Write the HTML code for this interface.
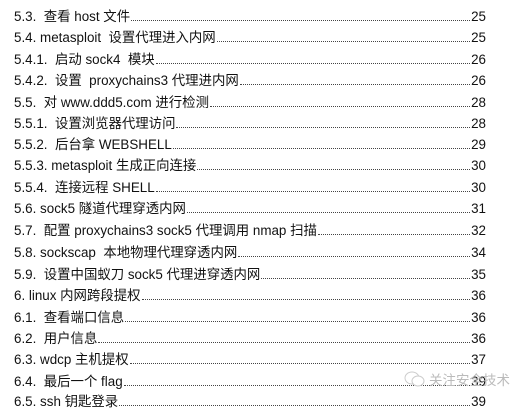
<!DOCTYPE html>
<html><head><meta charset="utf-8"><style>
body{margin:0;width:520px;height:403px;background:#fff;overflow:hidden;position:relative;font-family:"Liberation Sans","Noto Sans CJK SC",sans-serif;font-size:13.4px;color:#111}
.r{position:absolute;left:14px;width:472px;height:21px;display:flex;align-items:flex-end}
.t{white-space:pre;line-height:15px}
.d{flex:1;border-bottom:1px dotted #444;margin:0 1px 3px 1px}
.p{line-height:15px}
.wm{position:absolute;left:404px;top:369px;color:#bbb;font-size:13.5px;display:flex;align-items:center;gap:3px}
</style></head><body>
<div class="r" style="top:3px"><span class="t">5.3.  查看 host 文件</span><span class="d"></span><span class="p">25</span></div>
<div class="r" style="top:24px"><span class="t">5.4. metasploit  设置代理进入内网</span><span class="d"></span><span class="p">25</span></div>
<div class="r" style="top:46px"><span class="t">5.4.1.  启动 sock4  模块</span><span class="d"></span><span class="p">26</span></div>
<div class="r" style="top:67px"><span class="t">5.4.2.  设置  proxychains3 代理进内网</span><span class="d"></span><span class="p">26</span></div>
<div class="r" style="top:89px"><span class="t">5.5.  对 www.ddd5.com 进行检测</span><span class="d"></span><span class="p">28</span></div>
<div class="r" style="top:110px"><span class="t">5.5.1.  设置浏览器代理访问</span><span class="d"></span><span class="p">28</span></div>
<div class="r" style="top:131px"><span class="t">5.5.2.  后台拿 WEBSHELL</span><span class="d"></span><span class="p">29</span></div>
<div class="r" style="top:152px"><span class="t">5.5.3. metasploit 生成正向连接</span><span class="d"></span><span class="p">30</span></div>
<div class="r" style="top:174px"><span class="t">5.5.4.  连接远程 SHELL</span><span class="d"></span><span class="p">30</span></div>
<div class="r" style="top:195px"><span class="t">5.6. sock5 隧道代理穿透内网</span><span class="d"></span><span class="p">31</span></div>
<div class="r" style="top:217px"><span class="t">5.7.  配置 proxychains3 sock5 代理调用 nmap 扫描</span><span class="d"></span><span class="p">32</span></div>
<div class="r" style="top:239px"><span class="t">5.8. sockscap  本地物理代理穿透内网</span><span class="d"></span><span class="p">34</span></div>
<div class="r" style="top:261px"><span class="t">5.9.  设置中国蚁刀 sock5 代理进穿透内网</span><span class="d"></span><span class="p">35</span></div>
<div class="r" style="top:282px"><span class="t">6. linux 内网跨段提权</span><span class="d"></span><span class="p">36</span></div>
<div class="r" style="top:304px"><span class="t">6.1.  查看端口信息</span><span class="d"></span><span class="p">36</span></div>
<div class="r" style="top:325px"><span class="t">6.2.  用户信息</span><span class="d"></span><span class="p">36</span></div>
<div class="r" style="top:346px"><span class="t">6.3. wdcp 主机提权</span><span class="d"></span><span class="p">37</span></div>
<div class="r" style="top:368px"><span class="t">6.4.  最后一个 flag</span><span class="d"></span><span class="p">39</span></div>
<div class="r" style="top:388px"><span class="t">6.5. ssh 钥匙登录</span><span class="d"></span><span class="p">39</span></div>
<div class="wm"><svg width="22" height="18" viewBox="0 0 22 18"><ellipse cx="8" cy="8" rx="7" ry="6" fill="none" stroke="#ccc"/><ellipse cx="14" cy="11" rx="6" ry="5" fill="#fff" stroke="#ccc"/></svg><span>关注安全技术</span></div>
</body></html>
